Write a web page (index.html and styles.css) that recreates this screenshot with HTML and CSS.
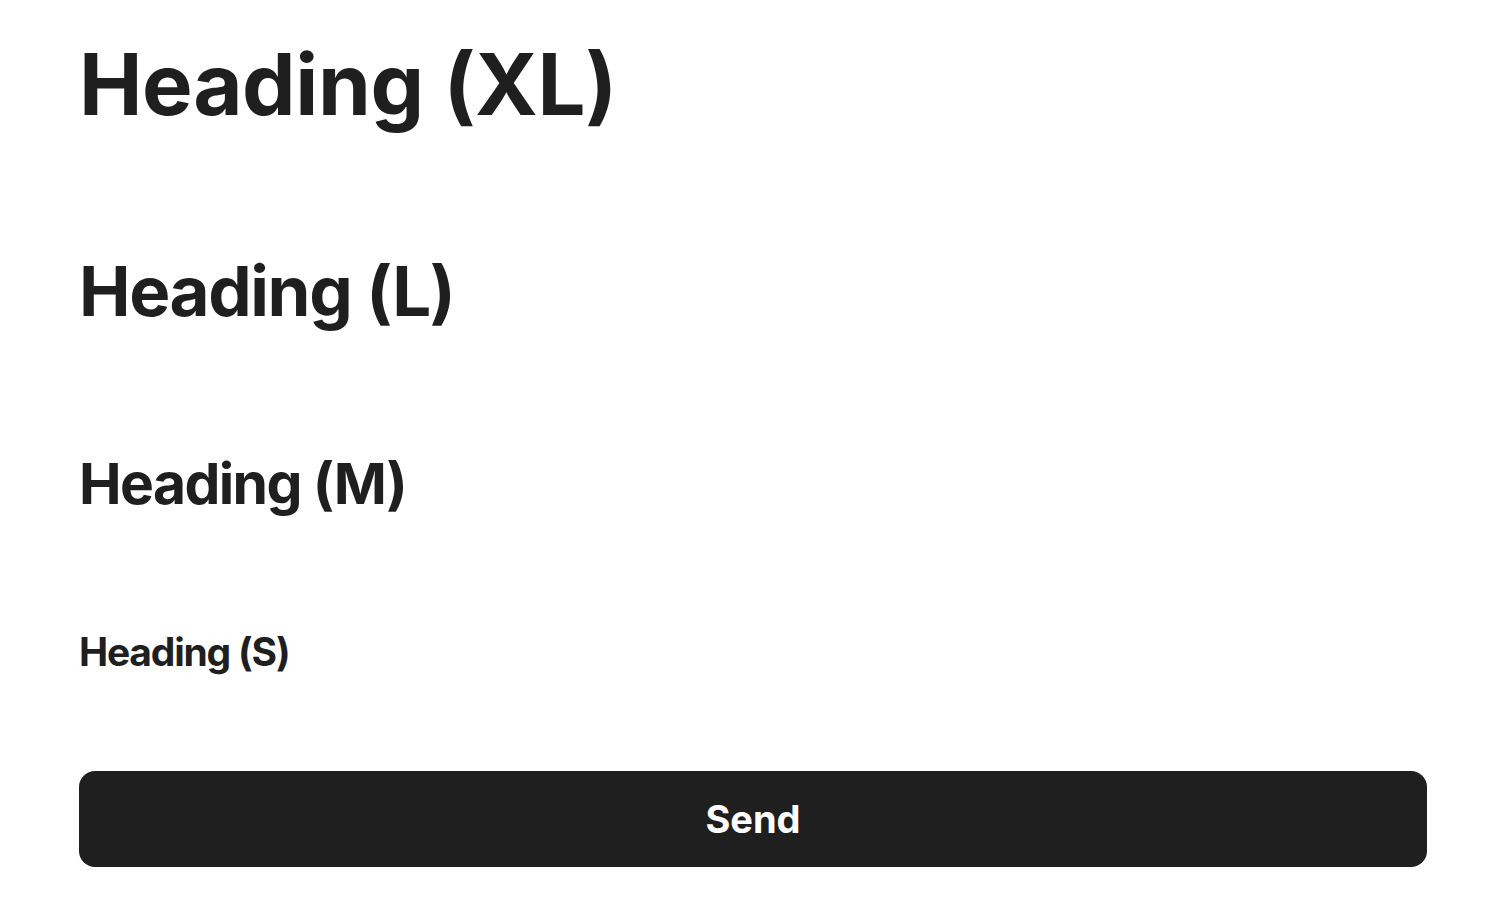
FILE: index.html
```html
<!DOCTYPE html>
<html lang="en">
<head>
    <meta charset="UTF-8">
    <meta name="viewport" content="width=device-width, initial-scale=1.0">
    <title>Headings</title>
    <link rel="stylesheet" href="styles.css">
</head>
<body>
    <div class="page">
        <h1 class="heading heading-xl">Heading (XL)</h1>
        <h2 class="heading heading-l">Heading (L)</h2>
        <h3 class="heading heading-m">Heading (M)</h3>
        <h4 class="heading heading-s">Heading (S)</h4>

        <button class="send-btn" type="button">Send</button>
    </div>
</body>
</html>
```

FILE: styles.css
```css
body {
    margin: 0;
    font-family: Inter, "Noto Sans", sans-serif;
    background-color: #fff;
    color: #1f1f1f;
}
.page {
    display: flex;
    flex-direction: column;
    align-items: flex-start;
    padding: 34px 73px 0 79px;
}
.heading {
    margin: 0;
    font-weight: 700;
    line-height: 1.2;
}
.heading-xl {
    font-size: 85px;
    letter-spacing: -0.4px;
}
.heading-l {
    font-size: 69px;
    letter-spacing: -1.4px;
    margin-top: 114px;
}
.heading-m {
    font-size: 57px;
    letter-spacing: -1.6px;
    margin-top: 117px;
}
.heading-s {
    font-size: 39px;
    letter-spacing: -1.2px;
    margin-top: 111px;
}
.send-btn {
    align-self: stretch;
    margin-top: 95px;
    height: 96px;
    border: none;
    border-radius: 16px;
    background-color: #1f1f1f;
    color: #fff;
    font-family: inherit;
    font-size: 38px;
    font-weight: 700;
    cursor: pointer;
}
```
